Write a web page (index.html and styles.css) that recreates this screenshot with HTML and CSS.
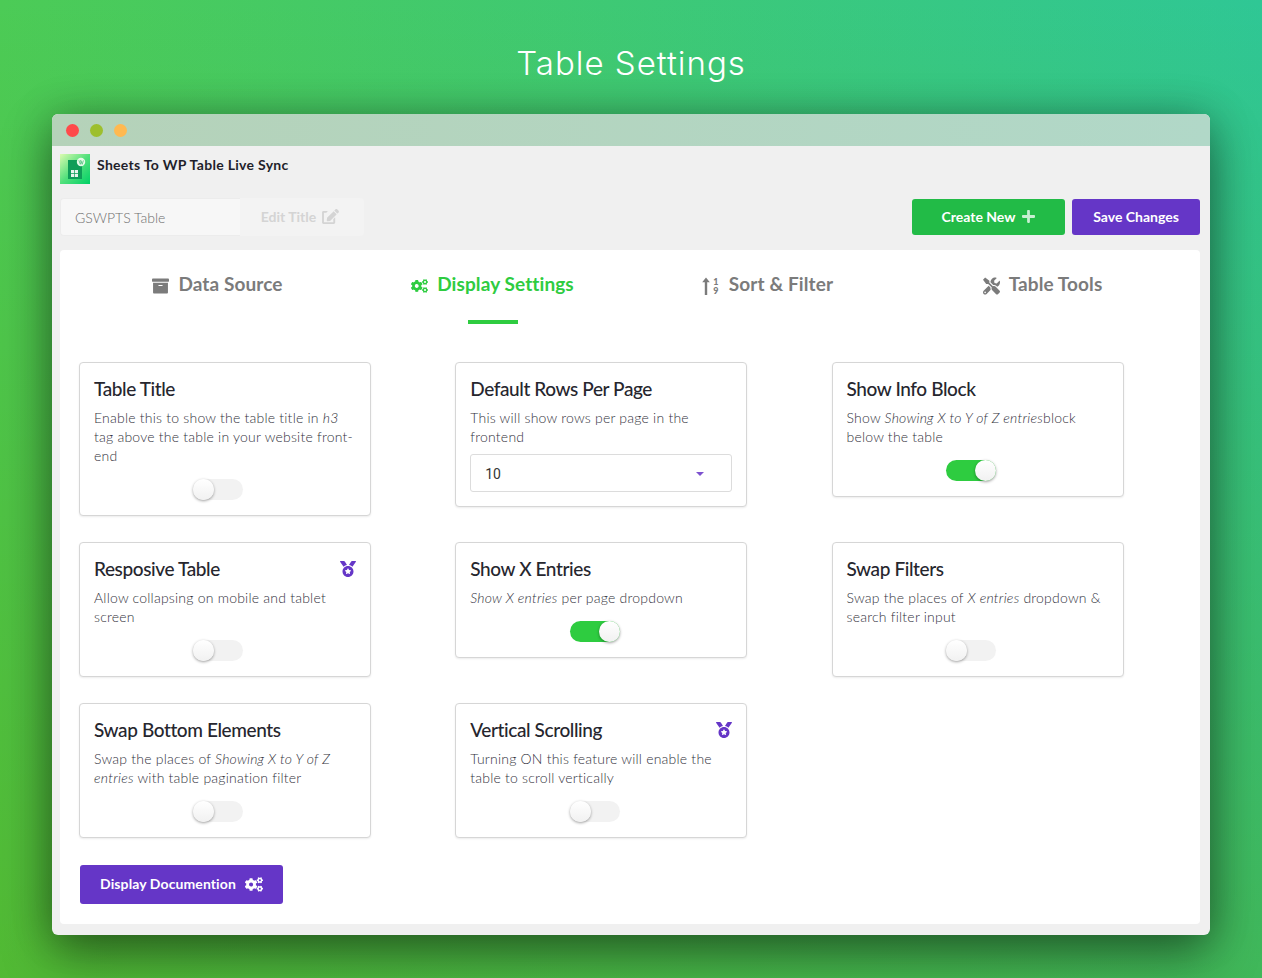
FILE: index.html
```html
<!DOCTYPE html>
<html>
<head>
  <title>Table Settings</title>
  <link rel="stylesheet" href="styles.css">
</head>
<body>
  <svg class="sprites" width="0" height="0">
    <symbol id="i-cogs" viewBox="0 0 640 512"><path d="M512.1 191l-8.2 14.3c-3 5.3-9.4 7.5-15.1 5.4-11.8-4.4-22.6-10.7-32.1-18.6-4.6-3.8-5.8-10.5-2.8-15.7l8.2-14.3c-6.9-8-12.3-17.3-15.9-27.4h-16.5c-6 0-11.2-4.3-12.2-10.3-2-12-2.1-24.6 0-37.1 1-6 6.2-10.4 12.2-10.4h16.5c3.6-10.1 9-19.4 15.9-27.4l-8.2-14.3c-3-5.2-1.9-11.9 2.8-15.7 9.5-7.9 20.4-14.2 32.1-18.6 5.7-2.1 12.1.1 15.1 5.4l8.2 14.3c10.5-1.9 21.2-1.9 31.7 0L552 6.3c3-5.3 9.4-7.5 15.1-5.4 11.8 4.4 22.6 10.7 32.1 18.6 4.6 3.8 5.8 10.5 2.8 15.7l-8.2 14.3c6.9 8 12.3 17.3 15.9 27.4h16.5c6 0 11.2 4.3 12.2 10.3 2 12 2.1 24.6 0 37.1-1 6-6.2 10.4-12.2 10.4h-16.5c-3.6 10.1-9 19.4-15.9 27.4l8.2 14.3c3 5.2 1.9 11.9-2.8 15.7-9.5 7.9-20.4 14.2-32.1 18.6-5.7 2.1-12.1-.1-15.1-5.4l-8.2-14.3c-10.4 1.9-21.2 1.9-31.7 0zm-10.5-58.8c38.5 29.6 82.4-14.3 52.8-52.8-38.5-29.7-82.4 14.3-52.8 52.8zM386.3 286.1l33.7 16.8c10.1 5.8 14.5 18.1 10.5 29.1-8.9 24.2-26.4 46.4-42.6 65.8-7.4 8.9-20.2 11.1-30.3 5.3l-29.1-16.8c-16 13.7-34.6 24.6-54.9 31.7v33.6c0 11.6-8.3 21.6-19.7 23.6-24.6 4.2-50.4 4.4-75.9 0-11.5-2-20-11.9-20-23.6V418c-20.3-7.2-38.9-18-54.9-31.7L74 403c-10 5.8-22.9 3.6-30.3-5.3-16.2-19.4-33.3-41.6-42.2-65.7-4-10.9.4-23.2 10.5-29.1l33.3-16.8c-3.9-20.9-3.9-42.4 0-63.4L12 205.8c-10.1-5.8-14.6-18.1-10.5-29 8.9-24.2 26-46.4 42.2-65.8 7.4-8.9 20.2-11.1 30.3-5.3l29.1 16.8c16-13.7 34.6-24.6 54.9-31.7V57.1c0-11.5 8.2-21.5 19.6-23.5 24.6-4.2 50.5-4.4 76-.1 11.5 2 20 11.9 20 23.6v33.6c20.3 7.2 38.9 18 54.9 31.7l29.1-16.8c10-5.8 22.9-3.6 30.3 5.3 16.2 19.4 33.2 41.6 42.1 65.8 4 10.9.1 23.2-10 29.1l-33.7 16.8c3.9 21 3.9 42.5 0 63.5zm-117.6 21.1c59.2-77-28.7-164.9-105.7-105.7-59.2 77 28.7 164.9 105.7 105.7zm243.4 182.7l-8.2 14.3c-3 5.3-9.4 7.5-15.1 5.4-11.8-4.4-22.6-10.7-32.1-18.6-4.6-3.8-5.8-10.5-2.8-15.7l8.2-14.3c-6.9-8-12.3-17.3-15.9-27.4h-16.5c-6 0-11.2-4.3-12.2-10.3-2-12-2.1-24.6 0-37.1 1-6 6.2-10.4 12.2-10.4h16.5c3.6-10.1 9-19.4 15.9-27.4l-8.2-14.3c-3-5.2-1.9-11.9 2.8-15.7 9.5-7.9 20.4-14.2 32.1-18.6 5.7-2.1 12.1.1 15.1 5.4l8.2 14.3c10.5-1.9 21.2-1.9 31.7 0l8.2-14.3c3-5.3 9.4-7.5 15.1-5.4 11.8 4.4 22.6 10.7 32.1 18.6 4.6 3.8 5.8 10.5 2.8 15.7l-8.2 14.3c6.9 8 12.3 17.3 15.9 27.4h16.5c6 0 11.2 4.3 12.2 10.3 2 12 2.1 24.6 0 37.1-1 6-6.2 10.4-12.2 10.4h-16.5c-3.6 10.1-9 19.4-15.9 27.4l8.2 14.3c3 5.2 1.9 11.9-2.8 15.7-9.5 7.9-20.4 14.2-32.1 18.6-5.7 2.1-12.1-.1-15.1-5.4l-8.2-14.3c-10.4 1.9-21.2 1.9-31.7 0zM501.6 431c38.5 29.6 82.4-14.3 52.8-52.8-38.5-29.6-82.4 14.3-52.8 52.8z"/></symbol>
    <symbol id="i-medal" viewBox="0 0 512 512"><path d="M223.75 130.75L154.62 15.54A31.997 31.997 0 0 0 127.18 0H16.03C3.08 0-4.5 14.57 2.92 25.18l111.27 158.96c29.72-27.77 67.52-46.83 109.56-53.39zM495.97 0H384.82c-11.24 0-21.66 5.9-27.44 15.54l-69.13 115.21c42.04 6.56 79.84 25.62 109.56 53.38L509.08 25.18C516.5 14.57 508.92 0 495.97 0zM256 160c-97.2 0-176 78.8-176 176s78.8 176 176 176 176-78.8 176-176-78.8-176-176-176zm92.52 157.26l-37.93 36.96 8.97 52.22c1.6 9.36-8.26 16.51-16.65 12.09L256 393.88l-46.9 24.65c-8.4 4.45-18.25-2.74-16.65-12.09l8.97-52.22-37.93-36.96c-6.82-6.64-3.05-18.23 6.35-19.59l52.43-7.64 23.43-47.52c2.11-4.28 6.19-6.39 10.28-6.39 4.11 0 8.22 2.14 10.33 6.39l23.43 47.52 52.43 7.64c9.4 1.36 13.17 12.95 6.35 19.59z"/></symbol>
  </svg>

  <h1 class="page-title">Table Settings</h1>

  <div class="window">
    <div class="titlebar">
      <span class="dot dot-red"></span>
      <span class="dot dot-green"></span>
      <span class="dot dot-orange"></span>
    </div>

    <div class="brand">
      <svg class="logo" viewBox="0 0 30 30">
        <defs>
          <linearGradient id="logo-bg" x1="0" y1="0" x2="1" y2="1">
            <stop offset="0" stop-color="#dcfbb0"/>
            <stop offset="0.5" stop-color="#52e07c"/>
            <stop offset="1" stop-color="#00d166"/>
          </linearGradient>
        </defs>
        <rect width="30" height="30" fill="url(#logo-bg)"/>
        <path d="M8 6h10l4 4v15H8z" fill="#0f9d58"/>
        <path d="M11 16h7v7h-7z" fill="#e8f5ec"/>
        <path d="M14.200 16h.7v7h-.7zM11 19.200h7v.7h-7z" fill="#0f9d58"/>
        <circle cx="21" cy="8" r="4.200" fill="#e6fbe9"/>
        <path d="M18.900 6.300l1.400 4 .8-2.400-.6-1.600M20.800 6.300l1.400 4 1.200-3.800" fill="none" stroke="#4cc27a" stroke-width=".8"/>
      </svg>
      <span class="brand-name">Sheets To WP Table Live Sync</span>
    </div>

    <div class="toolbar">
      <div class="title-group">
        <div class="title-input">GSWPTS Table</div>
        <div class="title-edit">Edit Title
          <svg class="icon-edit" viewBox="0 0 576 512"><path d="M402.6 83.2l90.2 90.2c3.8 3.8 3.8 10 0 13.8L274.4 405.6l-92.8 10.3c-12.4 1.4-22.9-9.1-21.5-21.5l10.3-92.8L388.8 83.2c3.8-3.8 10-3.8 13.8 0zm162-22.9l-48.8-48.8c-15.2-15.2-39.9-15.2-55.2 0l-35.4 35.4c-3.8 3.8-3.8 10 0 13.8l90.2 90.2c3.8 3.8 10 3.8 13.8 0l35.4-35.4c15.2-15.3 15.2-40 0-55.2zM384 346.2V448H64V128h73.1c3.2 0 6.2-1.3 8.5-3.5l40-40c7.6-7.6 2.2-20.5-8.5-20.5H48C21.5 64 0 85.5 0 112v352c0 26.5 21.5 48 48 48h352c26.5 0 48-21.5 48-48V306.2c0-10.7-12.9-16-20.5-8.5l-40 40c-2.2 2.3-3.5 5.3-3.5 8.5z"/></svg>
        </div>
      </div>
      <div class="actions">
        <a class="btn btn-green">Create New
          <svg class="icon-plus" viewBox="0 0 448 512"><path d="M416 208H272V64c0-17.67-14.33-32-32-32h-32c-17.67 0-32 14.33-32 32v144H32c-17.67 0-32 14.33-32 32v32c0 17.67 14.33 32 32 32h144v144c0 17.67 14.33 32 32 32h32c17.67 0 32-14.33 32-32V304h144c17.67 0 32-14.33 32-32v-32c0-17.67-14.33-32-32-32z"/></svg>
        </a>
        <a class="btn btn-purple btn-save">Save Changes</a>
      </div>
    </div>

    <div class="panel">
      <div class="tabs">
        <div class="tab">
          <div class="tab-label">
            <svg class="tab-icon" viewBox="0 0 512 512"><path d="M32 448c0 17.7 14.3 32 32 32h384c17.7 0 32-14.3 32-32V160H32v288zm160-212c0-6.6 5.4-12 12-12h104c6.6 0 12 5.4 12 12v8c0 6.6-5.4 12-12 12H204c-6.6 0-12-5.4-12-12v-8zM480 32H32C14.3 32 0 46.3 0 64v48c0 8.8 7.2 16 16 16h480c8.8 0 16-7.200 16-16V64c0-17.700-14.300-32-32-32z"/></svg>
            Data Source
          </div>
        </div>
        <div class="tab tab-active">
          <div class="tab-label">
            <svg class="tab-icon"><use href="#i-cogs"/></svg>
            Display Settings
          </div>
          <div class="tab-line"></div>
        </div>
        <div class="tab">
          <div class="tab-label">
            <span class="sort-icon">
              <svg class="sort-arrow" viewBox="0 0 8 18"><path d="M5.200 18V5.300h2.600L4 .5.200 5.300h2.600V18z"/></svg>
              <span class="sort-digits">1<br>9</span>
            </span>
            Sort &amp; Filter
          </div>
        </div>
        <div class="tab">
          <div class="tab-label">
            <svg class="tab-icon" viewBox="0 0 512 512"><path d="M501.1 395.7L384 278.6c-23.1-23.1-57.6-27.6-85.4-13.9L192 158.1V96L64 0 0 64l96 128h62.1l106.6 106.6c-13.6 27.8-9.2 62.3 13.9 85.4l117.1 117.1c14.6 14.6 38.2 14.6 52.7 0l52.7-52.7c14.5-14.6 14.5-38.2 0-52.7zM331.7 225c28.3 0 54.9 11 74.9 31l19.4 19.4c15.8-6.9 30.8-16.5 43.8-29.5 37.1-37.1 49.7-89.3 37.9-136.7-2.2-9-13.5-12.1-20.1-5.5l-74.4 74.4-67.9-11.3L334 98.9l74.4-74.4c6.6-6.6 3.4-17.9-5.7-20.2-47.4-11.7-99.6.9-136.6 37.9-28.5 28.5-41.9 66.1-41.2 103.6l82.1 82.1c8.1-1.9 16.5-2.9 24.7-2.9zm-103.9 82l-56.7-56.7L18.7 402.8c-25 25-25 65.5 0 90.5s65.5 25 90.5 0l123.6-123.6c-7.6-19.9-9.9-41.6-5-62.7zM64 472c-13.2 0-24-10.8-24-24 0-13.3 10.7-24 24-24s24 10.7 24 24c0 13.2-10.7 24-24 24z"/></svg>
            Table Tools
          </div>
        </div>
      </div>

      <div class="cards">
        <div class="card">
          <h3>Table Title</h3>
          <p>Enable this to show the table title in <i>h3</i> tag above the table in your website front-end</p>
          <div class="toggle"><span class="knob"></span></div>
        </div>
        <div class="card">
          <h3>Default Rows Per Page</h3>
          <p>This will show rows per page in the frontend</p>
          <div class="select">10<span class="caret"></span></div>
        </div>
        <div class="card">
          <h3>Show Info Block</h3>
          <p>Show <i>Showing X to Y of Z entries</i>block below the table</p>
          <div class="toggle toggle-on"><span class="knob"></span></div>
        </div>

        <div class="card">
          <h3>Resposive Table</h3>
          <svg class="medal"><use href="#i-medal"/></svg>
          <p>Allow collapsing on mobile and tablet screen</p>
          <div class="toggle"><span class="knob"></span></div>
        </div>
        <div class="card">
          <h3>Show X Entries</h3>
          <p><i>Show X entries</i> per page dropdown</p>
          <div class="toggle toggle-on"><span class="knob"></span></div>
        </div>
        <div class="card">
          <h3>Swap Filters</h3>
          <p>Swap the places of <i>X entries</i> dropdown &amp; search filter input</p>
          <div class="toggle"><span class="knob"></span></div>
        </div>

        <div class="card">
          <h3>Swap Bottom Elements</h3>
          <p>Swap the places of <i>Showing X to Y of Z entries</i> with table pagination filter</p>
          <div class="toggle"><span class="knob"></span></div>
        </div>
        <div class="card">
          <h3>Vertical Scrolling</h3>
          <svg class="medal"><use href="#i-medal"/></svg>
          <p>Turning ON this feature will enable the table to scroll vertically</p>
          <div class="toggle"><span class="knob"></span></div>
        </div>
      </div>

      <a class="btn btn-purple btn-docs">Display Documention
        <svg class="icon-cogs"><use href="#i-cogs"/></svg>
      </a>
    </div>
  </div>
</body>
</html>
```

FILE: styles.css
```css
body {
  margin: 0;
  height: 978px;
  overflow: hidden;
  font-family: 'Lato', sans-serif;
  background:
    linear-gradient(to bottom, rgba(90, 160, 0, 0), rgba(90, 160, 0, 0.4)),
    linear-gradient(to right, #4ccb56, #2fc795);
}
.sprites {
  display: block;
  height: 0;
}
.page-title {
  margin: 0;
  padding-top: 41px;
  height: 114px;
  box-sizing: border-box;
  text-align: center;
  font-family: 'Inter', sans-serif;
  font-size: 33px;
  line-height: 44px;
  font-weight: 300;
  letter-spacing: 1px;
  color: #fff;
}
.window {
  width: 1158px;
  height: 821px;
  margin-left: 52px;
  background-color: #f0f0f0;
  border-radius: 6px;
  overflow: hidden;
  box-shadow: 0 0 40px rgba(0, 0, 0, 0.22), 0 20px 50px rgba(0, 0, 0, 0.42);
}
.titlebar {
  display: flex;
  align-items: center;
  gap: 11px;
  height: 32px;
  padding-left: 14px;
  background: linear-gradient(to right, #b5d2b9, #b1d8c8);
}
.dot {
  width: 13px;
  height: 13px;
  border-radius: 50%;
}
.dot-red { background-color: #ff4a4a; }
.dot-green { background-color: #9dbf2e; }
.dot-orange { background-color: #ffb950; }

.brand {
  display: flex;
  align-items: flex-start;
  gap: 7px;
  padding: 8px 0 0 8px;
  height: 44px;
  box-sizing: border-box;
}
.logo {
  width: 30px;
  height: 30px;
}
.brand-name {
  font-size: 14px;
  line-height: 22px;
  font-weight: 700;
  color: #1f1f2b;
  letter-spacing: 0.3px;
}
.toolbar {
  display: flex;
  justify-content: space-between;
  align-items: center;
  height: 38px;
  margin: 8px 10px 14px 8px;
}
.title-group {
  display: flex;
  height: 38px;
}
.title-input {
  width: 180px;
  box-sizing: border-box;
  padding-left: 14px;
  font-size: 14px;
  font-weight: 300;
  line-height: 37px;
  color: #6f6f6f;
  background-color: #f7f7f7;
  border: 1px solid #ececec;
  border-right: 0;
  border-radius: 4px 0 0 4px;
}
.title-edit {
  display: flex;
  align-items: center;
  justify-content: center;
  gap: 6px;
  width: 124px;
  padding: 0 4px 2px 0;
  box-sizing: border-box;
  font-size: 14px;
  font-weight: 700;
  color: #d4d4d4;
  background-color: #f3f3f3;
  border-radius: 0 4px 4px 0;
}
.icon-edit {
  width: 17px;
  height: 15px;
  fill: #d4d4d4;
}
.actions {
  display: flex;
  gap: 7px;
}
.btn {
  display: flex;
  align-items: center;
  justify-content: center;
  height: 36px;
  padding-bottom: 2px;
  box-sizing: border-box;
  border-radius: 3px;
  font-size: 14px;
  font-weight: 700;
  color: #fff;
}
.btn-green {
  width: 153px;
  gap: 7px;
  background-color: #22bb47;
}
.btn-purple {
  background-color: #6536c7;
}
.btn-save {
  width: 128px;
}
.icon-plus {
  width: 13px;
  height: 15px;
  fill: #c8efd2;
}

.panel {
  height: 674px;
  margin: 0 10px 0 8px;
  padding: 20px 20px 0;
  box-sizing: border-box;
  background-color: #fff;
  border-radius: 4px;
}
.tabs {
  display: grid;
  grid-template-columns: repeat(4, 275px);
  height: 54px;
  margin-bottom: 38px;
}
.tab {
  display: flex;
  flex-direction: column;
  align-items: center;
  color: #7b7b7b;
}
.tab-label {
  display: flex;
  align-items: center;
  gap: 9px;
  height: 28px;
  padding-bottom: 2px;
  box-sizing: border-box;
  font-size: 19px;
  font-weight: 700;
  letter-spacing: 0.1px;
}
.tab-icon {
  width: 17px;
  height: 18px;
  fill: currentColor;
  margin-top: 5px;
}
.tab-active {
  color: #2ecc40;
}
.tab-line {
  width: 50px;
  height: 4px;
  margin-top: 22px;
  background-color: #2ecc40;
}
.sort-icon {
  display: flex;
  align-items: center;
  gap: 2px;
  margin-top: 5px;
}
.sort-arrow {
  width: 8px;
  height: 18px;
  fill: currentColor;
}
.sort-digits {
  width: 8px;
  font-size: 9px;
  line-height: 9px;
  font-weight: 900;
  text-align: center;
}

.cards {
  display: grid;
  grid-template-columns: repeat(3, 292px);
  column-gap: 84.25px;
  row-gap: 26px;
  align-items: start;
  margin-left: -1px;
  margin-bottom: 27px;
}
.card {
  position: relative;
  box-sizing: border-box;
  padding: 13px 14px 15px;
  background-color: #fff;
  border: 1px solid #d6d6d6;
  border-radius: 4px;
  box-shadow: 0 1px 2px rgba(0, 0, 0, 0.08);
}
.card h3 {
  margin: 0 0 6px;
  font-size: 19px;
  line-height: 26px;
  font-weight: 500;
  color: #26262e;
  letter-spacing: -0.4px;
}
.card p {
  margin: 0;
  font-size: 14px;
  line-height: 19px;
  font-weight: 300;
  color: #33333d;
  letter-spacing: 0.22px;
}
.medal {
  position: absolute;
  top: 18px;
  right: 14px;
  width: 16px;
  height: 16px;
  fill: #6536c7;
}
.toggle {
  width: 50px;
  height: 21px;
  margin: 14px 0 0 99.5px;
  display: flex;
  background-color: #f2f2f2;
  border-radius: 11px;
}
.card:nth-child(3n+1) .toggle {
  margin-left: 98.5px;
}
.knob {
  width: 21px;
  height: 21px;
  border-radius: 50%;
  background: linear-gradient(to bottom, #fff, #f1f1f1);
  box-shadow: 0 1px 3px rgba(0, 0, 0, 0.4);
}
.toggle-on {
  background-color: #2ecc40;
  justify-content: flex-end;
}
.select {
  display: flex;
  align-items: center;
  justify-content: space-between;
  height: 38px;
  margin: 8px 0 -1px;
  padding: 1px 27px 0 14px;
  box-sizing: border-box;
  font-family: 'Roboto', sans-serif;
  font-size: 14px;
  color: #333;
  border: 1px solid #dcdcdc;
  border-radius: 3px;
}
.caret {
  border-top: 4px solid #7d52cf;
  border-left: 4px solid transparent;
  border-right: 4px solid transparent;
}
.btn-docs {
  width: 203px;
  height: 39px;
  padding-bottom: 3px;
  gap: 9px;
  letter-spacing: 0.1px;
}
.icon-cogs {
  width: 18px;
  height: 15px;
  fill: #fff;
  margin-top: 3px;
}
```
